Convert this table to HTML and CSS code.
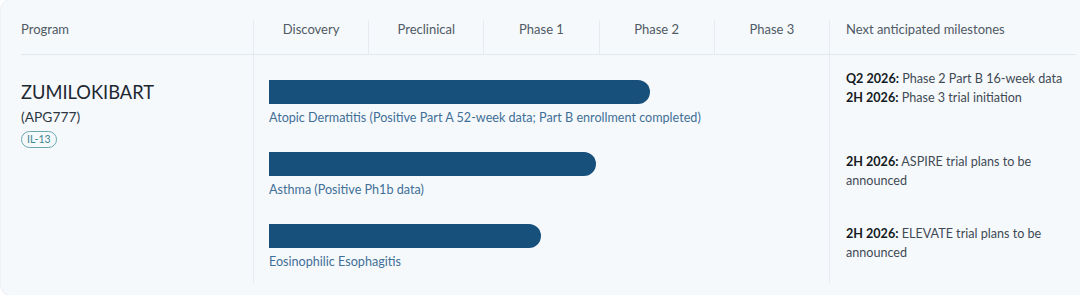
FILE: index.html
```html
<!DOCTYPE html>
<html lang="en">
<head>
    <meta charset="UTF-8">
    <meta name="viewport" content="width=device-width, initial-scale=1.0">
    <title>Pipeline</title>
    <link rel="stylesheet" href="styles.css">
</head>
<body>
    <section class="pipeline">
        <div class="pipeline-table">
            <!-- Header row -->
            <div class="head head-program">Program</div>
            <div class="head head-phase">Discovery</div>
            <div class="head head-phase">Preclinical</div>
            <div class="head head-phase">Phase 1</div>
            <div class="head head-phase">Phase 2</div>
            <div class="head head-phase">Phase 3</div>
            <div class="head head-milestone">Next anticipated milestones</div>

            <!-- Program cell spans all indications -->
            <div class="program">
                <div class="program-name">ZUMILOKIBART</div>
                <div class="program-code">(APG777)</div>
                <span class="target">IL-13</span>
            </div>

            <div class="indication first">
                <div class="bar" style="width: 381px;"></div>
                <div class="indication-label">Atopic Dermatitis (Positive Part A 52-week data; Part B enrollment completed)</div>
            </div>
            <div class="milestone first">
                <p><b>Q2 2026:</b> Phase 2 Part B 16-week data</p>
                <p><b>2H 2026:</b> Phase 3 trial initiation</p>
            </div>

            <div class="indication">
                <div class="bar" style="width: 327px;"></div>
                <div class="indication-label">Asthma (Positive Ph1b data)</div>
            </div>
            <div class="milestone">
                <p><b>2H 2026:</b> ASPIRE trial plans to be announced</p>
            </div>

            <div class="indication last">
                <div class="bar" style="width: 272px;"></div>
                <div class="indication-label">Eosinophilic Esophagitis</div>
            </div>
            <div class="milestone last">
                <p><b>2H 2026:</b> ELEVATE trial plans to be announced</p>
            </div>
        </div>
    </section>
</body>
</html>
```

FILE: styles.css
```css
/* Global Styling */
body {
    font-family: 'Lato', 'Noto Sans', sans-serif;
    margin: 0;
    padding: 0;
    background: #ffffff;
    color: #3a4651;
    overflow: hidden;
}

.pipeline {
    margin-left: 1px;
    width: 1095px;
    padding: 20px 20px 12px;
    box-sizing: border-box;
    background: #f6f9fc;
    box-shadow: 0 0 0 1px #eef2f6;
    border-radius: 10px;
}

.pipeline-table {
    display: grid;
    grid-template-columns: 232px repeat(5, 115.2px) 1fr;
}

/* Header */
.head {
    height: 34px;
    line-height: 18px;
    font-size: 13px;
    color: #4f5a64;
    border-bottom: 1px solid #e1e8ee;
}

.head-phase {
    text-align: center;
    border-left: 1px solid #e5ebf0;
}

.head-milestone {
    padding-left: 16px;
    border-left: 1px solid #e5ebf0;
}

/* Program column */
.program {
    grid-column: 1;
    grid-row: 2 / 5;
    padding-top: 26px;
}

.program-name {
    font-size: 18.3px;
    line-height: 22px;
    color: #1d2731;
}

.program-code {
    margin-top: 4px;
    font-size: 13.8px;
    line-height: 20px;
    color: #2c3742;
}

.target {
    display: inline-block;
    margin-top: 3px;
    padding: 0 5px;
    height: 15px;
    line-height: 15px;
    font-size: 10.5px;
    color: #3d8790;
    border: 1px solid #6aa7ae;
    border-radius: 9px;
}

/* Bars */
.indication {
    grid-column: 2 / 7;
    padding: 25px 0 0 15px;
    border-left: 1px solid #e5ebf0;
}

.bar {
    height: 24px;
    background: #16507b;
    border-radius: 0 12px 12px 0;
}

.indication-label {
    margin-top: 4px;
    line-height: 19px;
    font-size: 12.6px;
    color: #3f6f97;
}

/* Milestones */
.milestone {
    grid-column: 7;
    padding: 25px 0 0 16px;
    border-left: 1px solid #e5ebf0;
    font-size: 12.6px;
    color: #3f4a55;
}

.milestone.first {
    padding-top: 14px;
}

.milestone p {
    margin: 0;
    line-height: 19px;
}

.milestone b {
    color: #141b22;
}

.last {
    padding-bottom: 12px;
}
```
